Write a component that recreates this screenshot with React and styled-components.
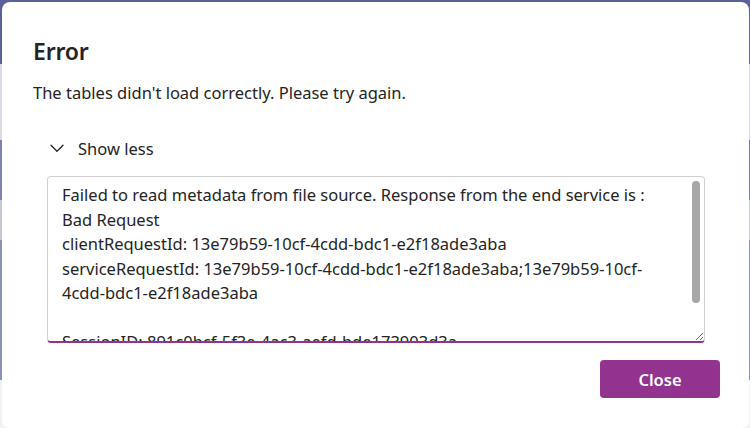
import React from "react"
import styled, { createGlobalStyle } from "styled-components"

const GlobalStyle = createGlobalStyle`
  html, body {
    margin: 0;
    padding: 0;
    height: 100%;
    overflow: hidden;
  }
  body {
    background: linear-gradient(
      to bottom,
      #5b6197 0px,
      #5b6197 64px,
      #d9dae4 64px,
      #d9dae4 140px,
      #7c82ae 140px,
      #7c82ae 200px,
      #c9c9d2 200px,
      #c9c9d2 240px,
      #8b90b8 240px,
      #8b90b8 380px,
      #f2f2f4 380px
    );
    font-family: "Noto Sans", "Open Sans", sans-serif;
  }
`

const errorDetails = `Failed to read metadata from file source. Response from the end service is :
Bad Request
clientRequestId: 13e79b59-10cf-4cdd-bdc1-e2f18ade3aba
serviceRequestId: 13e79b59-10cf-4cdd-bdc1-e2f18ade3aba;13e79b59-10cf-4cdd-bdc1-e2f18ade3aba

SessionID: 891c0bcf-5f3e-4ac3-aefd-bde173903d3a
Timestamp: 2024-03-18T09:41:22.517Z`

const App = () => {
  return (
    <>
      <GlobalStyle />
      <Dialog role="dialog" aria-labelledby="dlg-title">
        <Title id="dlg-title">Error</Title>
        <Message>The tables didn't load correctly. Please try again.</Message>

        <Details>
          <Toggle type="button">
            <svg width="16" height="16" viewBox="0 0 16 16" fill="none">
              <path
                d="M2 5.2 L8 11.2 L14 5.2"
                stroke="#242424"
                strokeWidth="1.3"
                strokeLinecap="round"
                strokeLinejoin="round"
              />
            </svg>
            <span>Show less</span>
          </Toggle>
          <BoxWrap>
            <DetailsBox readOnly defaultValue={errorDetails} />
            <ScrollThumb />
          </BoxWrap>
        </Details>

        <Footer>
          <PrimaryButton type="button">Close</PrimaryButton>
        </Footer>
      </Dialog>
    </>
  )
}

export default App

const Dialog = styled.div`
  box-sizing: border-box;
  margin: 2px 1px 0 2px;
  height: 426px;
  background: #ffffff;
  border-radius: 8px;
  padding: 33px 29px 0 31px;
  color: #242424;
  display: flex;
  flex-direction: column;
`

const Title = styled.h2`
  margin: 0;
  font-size: 23px;
  font-weight: 600;
  line-height: 32px;
  letter-spacing: -0.2px;
`

const Message = styled.p`
  margin: 14px 0 0 0;
  font-size: 16.5px;
  line-height: 24px;
`

const Details = styled.div`
  margin-top: 30px;
  padding-left: 14px;
  padding-right: 14px;
  display: flex;
  flex-direction: column;
`

const Toggle = styled.button`
  display: flex;
  align-items: center;
  gap: 13px;
  background: none;
  border: none;
  padding: 0 0 0 2px;
  font-family: inherit;
  font-size: 16.5px;
  color: #242424;
  height: 26px;
  cursor: pointer;
  align-self: flex-start;
`

const BoxWrap = styled.div`
  position: relative;
  margin-top: 15px;
  margin-right: 1px;
`

const DetailsBox = styled.textarea`
  display: block;
  box-sizing: border-box;
  width: 100%;
  height: 167px;
  border: 1px solid #d1d1d1;
  border-bottom: 2px solid #92348f;
  border-radius: 4px;
  padding: 6px 40px 0 14px;
  font-family: inherit;
  font-size: 16.5px;
  line-height: 24.5px;
  color: #242424;
  resize: vertical;
  outline: none;
  overflow: hidden;
`

const ScrollThumb = styled.div`
  position: absolute;
  top: 5px;
  right: 5px;
  width: 8px;
  height: 122px;
  border-radius: 4px;
  background: #a6a6a6;
  pointer-events: none;
`

const Footer = styled.div`
  display: flex;
  justify-content: flex-end;
  margin-top: 17px;
`

const PrimaryButton = styled.button`
  width: 120px;
  height: 38px;
  border: none;
  border-radius: 4px;
  background: #92348f;
  color: #ffffff;
  font-family: inherit;
  font-size: 16.5px;
  font-weight: 600;
  cursor: pointer;
`
